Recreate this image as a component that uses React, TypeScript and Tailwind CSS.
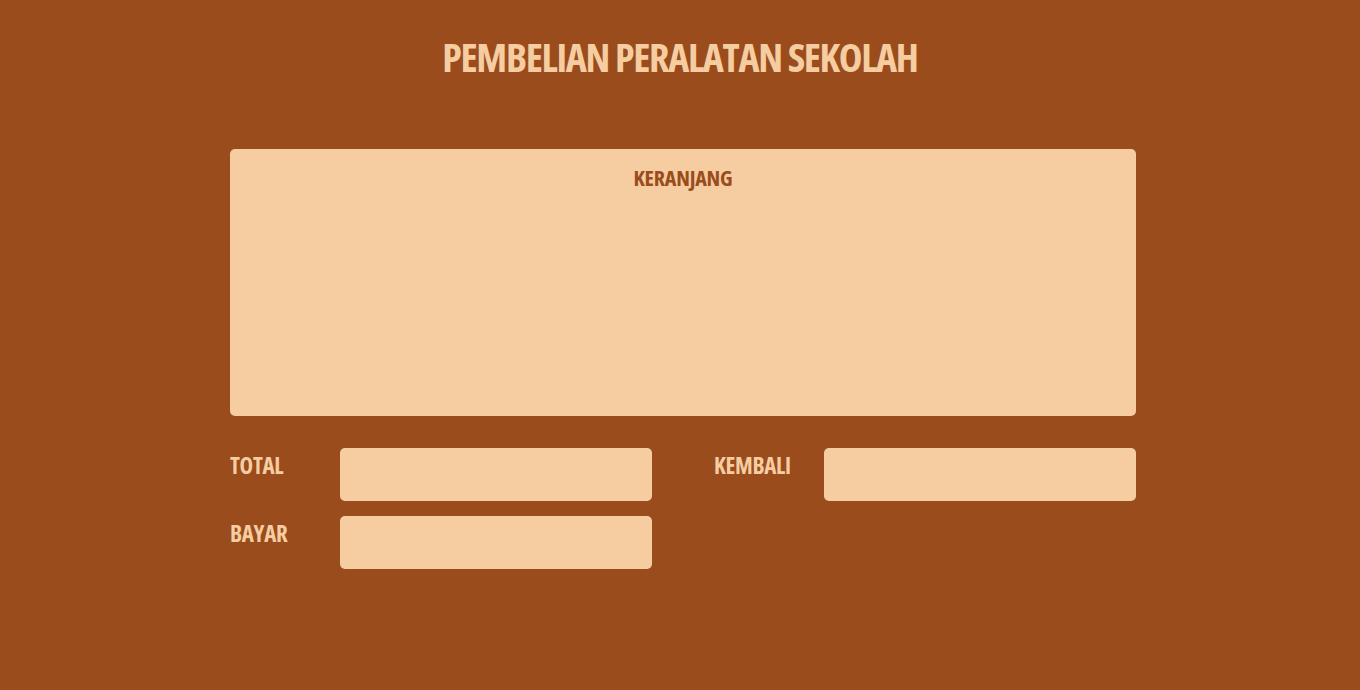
import React from "react";

const font = { fontFamily: '"Open Sans", sans-serif', fontStretch: "condensed" as const };

function Field({ label }: { label: string }) {
  return (
    <div className="flex items-start">
      <div className="w-[110px] pt-[6px] text-[23px] leading-[23px] font-bold text-[#f5cda1] tracking-[-0.3px]">{label}</div>
      <input className="h-[53px] w-[312px] rounded-[5px] bg-[#f5cda1] outline-none border-0 px-3" />
    </div>
  );
}

export default function App() {
  return (
    <div className="min-h-[690px] w-full bg-[#9a4c1d]" style={font}>
      <div className="mx-auto w-[912px] pl-[6px] pt-[37px]">
        <h1 className="text-center text-[40px] leading-[40px] font-bold text-[#f5cda1] tracking-[-1.3px] pr-[6px]">
          PEMBELIAN PERALATAN SEKOLAH
        </h1>
        <div className="mt-[72px] h-[267px] rounded-[5px] bg-[#f5cda1] pt-[17px]">
          <h2 className="text-center text-[22px] leading-[22px] font-bold text-[#9a4c1d] tracking-[-0.2px]">KERANJANG</h2>
        </div>
        <div className="mt-[32px] grid grid-cols-2 gap-x-[62px] gap-y-[15px]">
          <Field label="TOTAL" />
          <Field label="KEMBALI" />
          <Field label="BAYAR" />
        </div>
      </div>
    </div>
  );
}
